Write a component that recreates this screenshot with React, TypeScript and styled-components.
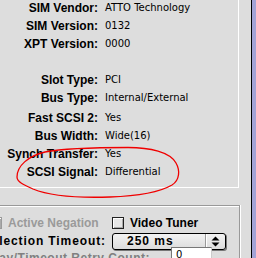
import { Fragment } from 'react'
import styled, { createGlobalStyle } from 'styled-components'

const GlobalStyle = createGlobalStyle`
  html, body {
    margin: 0;
    padding: 0;
    background: #dddddd;
    overflow: hidden;
  }
  body {
    width: 256px;
    height: 258px;
  }
`

const Window = styled.div`
  position: relative;
  display: flex;
  width: 256px;
  height: 258px;
  overflow: hidden;
  background: #dddddd;
`

const Content = styled.div`
  display: flex;
  flex-direction: column;
  width: 251px;
  overflow: hidden;
`

const WindowEdge = styled.div`
  width: 4px;
  border-left: 1px solid #000;
  background: #a3a3d6;
`

const InfoPanel = styled.div`
  flex-shrink: 0;
  width: 238px;
  height: 187px;
  border-right: 1px solid #fff;
  border-bottom: 1px solid #fff;
  box-sizing: content-box;
  overflow: hidden;
`

const InfoGrid = styled.div`
  display: grid;
  grid-template-columns: 98px 1fr;
  column-gap: 7px;
  align-items: center;
  margin-top: -1px;
`

const Label = styled.div`
  height: 18px;
  line-height: 18px;
  font-family: 'Liberation Sans', Arial, sans-serif;
  font-weight: 700;
  font-size: 12px;
  color: #000;
  text-align: right;
  white-space: nowrap;
`

const Value = styled.div`
  height: 18px;
  line-height: 18px;
  font-family: 'DejaVu Sans', Verdana, sans-serif;
  font-size: 10px;
  color: #000;
  white-space: nowrap;
`

const Blank = styled.div<{ $h: number }>`
  grid-column: 1 / span 2;
  height: ${(p) => p.$h}px;
`

const GroupBox = styled.div`
  flex-shrink: 0;
  margin-top: 17px;
  width: 239px;
  height: 60px;
  border-top: 1px solid #999;
  border-right: 1px solid #999;
  box-shadow: inset 0 1px #fff, 1px 0 #fff;
  padding-top: 8px;
  display: flex;
  flex-direction: column;
`

const Row = styled.div`
  display: grid;
  grid-template-columns: 112px 1fr;
  height: 18px;
  align-items: center;
`

const Cell = styled.div<{ $end?: boolean }>`
  display: flex;
  align-items: center;
  justify-content: ${(p) => (p.$end ? 'flex-end' : 'flex-start')};
  white-space: nowrap;
  min-width: 0;
  gap: 6px;
`

const Caption = styled.span<{ $dim?: boolean; $wide?: boolean }>`
  font-family: 'Liberation Sans', Arial, sans-serif;
  font-weight: 700;
  font-size: 12px;
  letter-spacing: ${(p) => (p.$wide ? '0.9px' : '0')};
  color: ${(p) => (p.$dim ? '#9a9a9a' : '#000')};
  flex-shrink: 0;
`

const Checkbox = styled.span<{ $dim?: boolean; $offset?: number }>`
  display: inline-block;
  flex-shrink: 0;
  width: 10px;
  height: 10px;
  margin-left: ${(p) => p.$offset ?? 0}px;
  border: 1px solid ${(p) => (p.$dim ? '#9a9a9a' : '#222')};
  background: #e6e6e6;
  box-shadow: inset 1px 1px #fff, inset -1px -1px #aaa;
`

const Popup = styled.div`
  display: flex;
  align-items: stretch;
  width: 112px;
  height: 15px;
  border: 1px solid #000;
  border-radius: 3px;
  background: linear-gradient(#f2f2f2, #dcdcdc);
  box-shadow: 1px 1px #777;
`

const PopupText = styled.span`
  flex: 1;
  padding-left: 14px;
  font-family: 'Liberation Sans', Arial, sans-serif;
  font-weight: 700;
  font-size: 12px;
  letter-spacing: 1px;
  line-height: 15px;
  color: #000;
`

const PopupArrows = styled.span`
  width: 19px;
  display: flex;
  align-items: center;
  justify-content: center;
  border-left: 1px solid #999;
  box-shadow: inset 1px 0 #fff;
`

const CountRow = styled.div`
  display: flex;
  align-items: flex-start;
  height: 18px;
`

const CountLabel = styled.div`
  width: 150px;
  display: flex;
  justify-content: flex-end;
  white-space: nowrap;
  padding-top: 1px;
  font-family: 'Liberation Sans', Arial, sans-serif;
  font-weight: 700;
  font-size: 12px;
  letter-spacing: 0.5px;
  color: #808080;
`

const TextField = styled.div`
  width: 35px;
  height: 14px;
  margin-left: 21px;
  margin-top: -3px;
  background: #fff;
  border: 1px solid #777;
  border-right-color: #ccc;
  border-bottom-color: #ccc;
  font-family: 'DejaVu Sans', Verdana, sans-serif;
  font-size: 10px;
  line-height: 14px;
  padding-left: 4px;
  box-sizing: content-box;
`

const Annotation = styled.svg`
  position: absolute;
  left: 0;
  top: 0;
  width: 256px;
  height: 258px;
  pointer-events: none;
`

type InfoRow = { label: string; value: string; gapAfter?: number }

const info: InfoRow[] = [
  { label: 'SIM Vendor:', value: 'ATTO Technology' },
  { label: 'SIM Version:', value: '0132' },
  { label: 'XPT Version:', value: '0000', gapAfter: 18 },
  { label: 'Slot Type:', value: 'PCI' },
  { label: 'Bus Type:', value: 'Internal/External', gapAfter: 2 },
  { label: 'Fast SCSI 2:', value: 'Yes' },
  { label: 'Bus Width:', value: 'Wide(16)' },
  { label: 'Synch Transfer:', value: 'Yes' },
  { label: 'SCSI Signal:', value: 'Differential' },
]

export default function App() {
  return (
    <>
      <GlobalStyle />
      <Window>
        <Content>
          <InfoPanel>
            <InfoGrid>
              {info.map((row) => (
                <Fragment key={row.label}>
                  <Label>{row.label}</Label>
                  <Value>{row.value}</Value>
                  {row.gapAfter ? <Blank $h={row.gapAfter} /> : null}
                </Fragment>
              ))}
            </InfoGrid>
          </InfoPanel>
          <GroupBox>
            <Row>
              <Cell>
                <Checkbox $dim $offset={-10} />
                <Caption $dim>Active Negation</Caption>
              </Cell>
              <Cell>
                <Checkbox />
                <Caption>Video Tuner</Caption>
              </Cell>
            </Row>
            <Row>
              <Cell $end>
                <Caption $wide>Selection Timeout:</Caption>
                <span style={{ width: 11 }} />
              </Cell>
              <Cell>
                <Popup>
                  <PopupText>250 ms</PopupText>
                  <PopupArrows>
                    <svg width="9" height="11" viewBox="0 0 9 11">
                      <path d="M4.5 0.5 L8.5 4.5 L0.5 4.5 Z" fill="#000" />
                      <path d="M0.5 6.5 L8.5 6.5 L4.5 10.5 Z" fill="#000" />
                    </svg>
                  </PopupArrows>
                </Popup>
              </Cell>
            </Row>
            <CountRow>
              <CountLabel>Delay/Timeout Retry Count:</CountLabel>
              <TextField>0</TextField>
            </CountRow>
          </GroupBox>
        </Content>
        <WindowEdge />
        <Annotation viewBox="0 0 256 258">
          <path
            d="M17,177 C17,166 28,156 45,152 C60,149 80,147.5 128,147.5 C150,147.5 170,152 176,163 C180,170 180,180 172,185 C160,192 140,196 110,197 C80,198 50,196 33,189 C24,185 17,182 17,177 Z"
            fill="none"
            stroke="#f00000"
            strokeWidth="1.3"
          />
        </Annotation>
      </Window>
    </>
  )
}
